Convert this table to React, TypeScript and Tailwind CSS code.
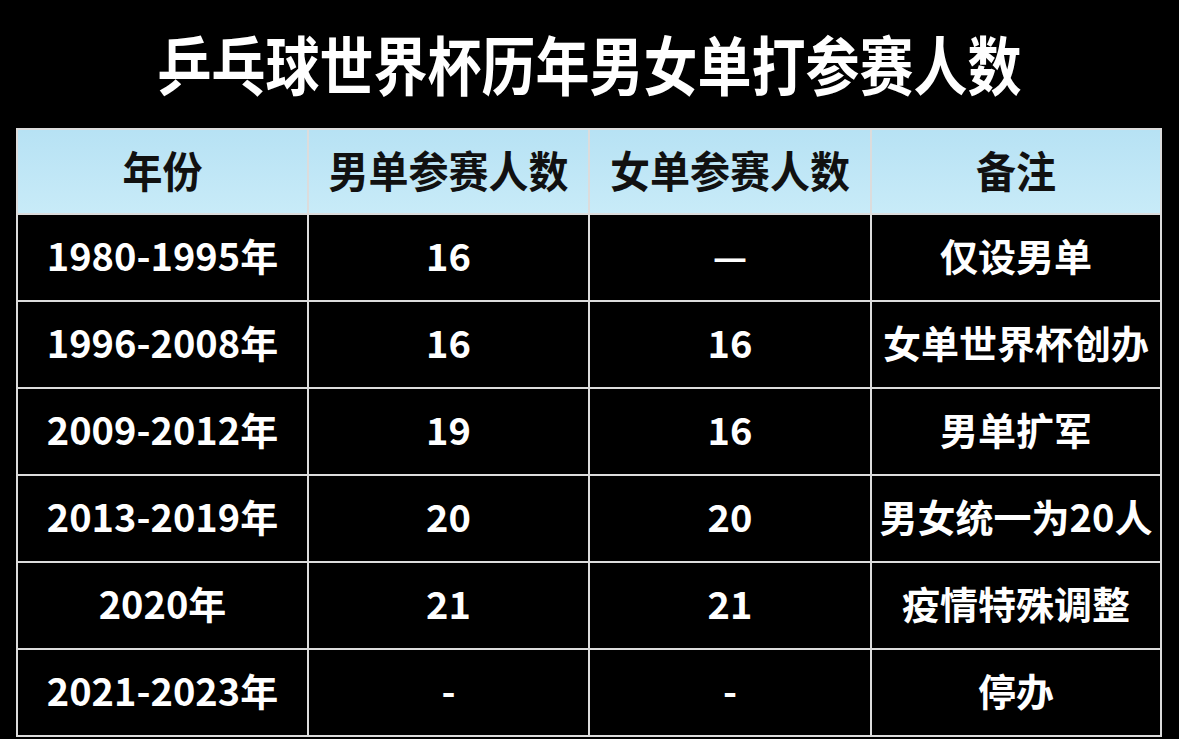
const font = { fontFamily: '"Noto Sans CJK SC", "Noto Sans", sans-serif' };

const header = ["年份", "男单参赛人数", "女单参赛人数", "备注"];

const rows: [string, string, string, string][] = [
  ["1980-1995年", "16", "—", "仅设男单"],
  ["1996-2008年", "16", "16", "女单世界杯创办"],
  ["2009-2012年", "19", "16", "男单扩军"],
  ["2013-2019年", "20", "20", "男女统一为20人"],
  ["2020年", "21", "21", "疫情特殊调整"],
  ["2021-2023年", "-", "-", "停办"],
];

export default function App() {
  return (
    <div
      className="w-[1179px] h-[739px] overflow-hidden bg-black flex flex-col"
      style={font}
    >
      <div className="h-[128px] flex items-center justify-center pb-[2px]">
        <h1 className="text-[54px] leading-none font-bold text-white scale-y-[1.18]">
          乒乓球世界杯历年男女单打参赛人数
        </h1>
      </div>

      <div className="ml-[16px] w-[1146px] p-[2px] bg-[#dcdcdc] grid grid-cols-[289px_279px_280px_288px] grid-rows-[83px_repeat(6,85px)] gap-[2px]">
        {header.map((h) => (
          <div
            key={h}
            className="flex items-center justify-center pb-[4px] bg-gradient-to-b from-[#b7e2f4] to-[#c8ebf8] text-[40px] font-bold text-[#111] leading-none"
          >
            <span className="scale-y-[1.08]">{h}</span>
          </div>
        ))}
        {rows.map((r) =>
          r.map((c, i) => (
            <div
              key={r[0] + i}
              className="flex items-center justify-center pb-[6px] bg-black text-[38px] font-bold text-white leading-none"
            >
              {c}
            </div>
          )),
        )}
      </div>
    </div>
  );
}
